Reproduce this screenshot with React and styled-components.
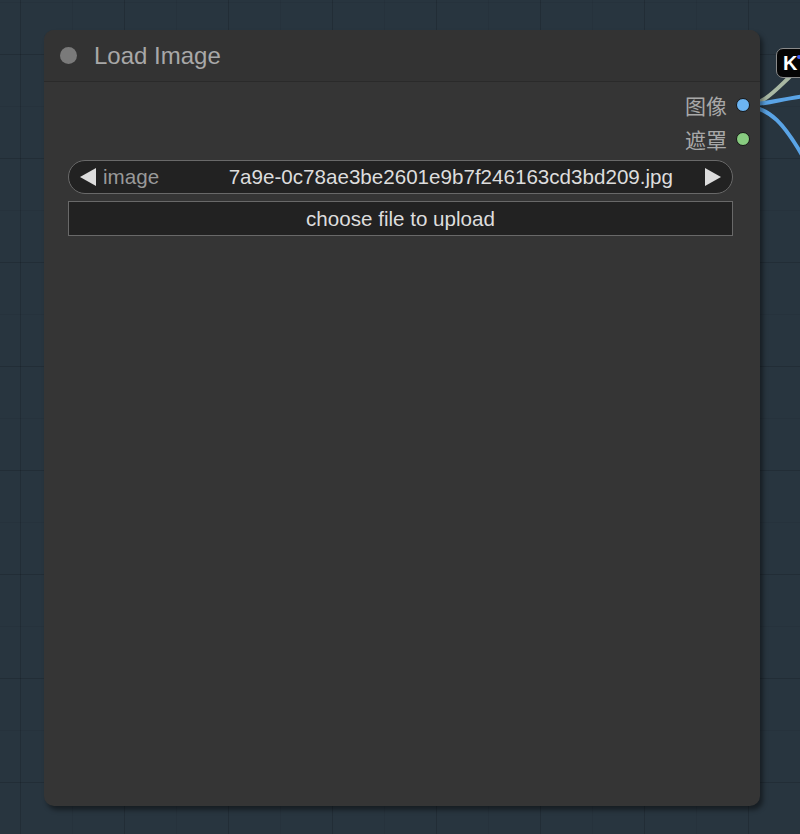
import React from "react";
import styled, { createGlobalStyle } from "styled-components";

const Global = createGlobalStyle`
  html, body { margin: 0; padding: 0; background: #28353f; }
  body { font-family: "Liberation Sans", Arial, sans-serif; }
`;

const Canvas = styled.div`
  position: relative;
  width: 800px;
  height: 834px;
  overflow: hidden;
  background-color: #28353f;
  background-image:
    linear-gradient(to right, rgba(0,0,0,0.10) 1px, transparent 1px),
    linear-gradient(to bottom, rgba(0,0,0,0.10) 1px, transparent 1px),
    linear-gradient(to right, rgba(0,0,0,0.05) 1px, transparent 1px),
    linear-gradient(to bottom, rgba(0,0,0,0.05) 1px, transparent 1px);
  background-size: 104px 104px, 104px 104px, 52px 52px, 52px 52px;
  background-position: 20px 0, 0 54px, 20px 0, 0 54px;
  padding: 30px 0 0 44px;
  box-sizing: border-box;
`;

const Wires = styled.svg`
  position: absolute;
  left: 700px;
  top: 40px;
  width: 100px;
  height: 140px;
  z-index: 0;
`;

const Node = styled.div`
  position: relative;
  z-index: 1;
  width: 716px;
  height: 776px;
  background: #353535;
  border-radius: 10px;
  box-shadow: 3px 4px 5px rgba(0, 0, 0, 0.45);
  display: flex;
  flex-direction: column;
`;

const TitleBar = styled.div`
  height: 51px;
  background: #333333;
  border-radius: 10px 10px 0 0;
  border-bottom: 1px solid #2a2a2a;
  display: flex;
  align-items: center;
  gap: 17px;
  padding-left: 16px;
`;

const TitleDot = styled.span`
  width: 17px;
  height: 17px;
  border-radius: 50%;
  background: #7a7a7a;
`;

const Title = styled.span`
  font-size: 24px;
  color: #a8a8a8;
  line-height: 1;
`;

const Outputs = styled.div`
  display: flex;
  flex-direction: column;
  padding-top: 6px;
`;

const OutputRow = styled.div`
  height: 34px;
  display: flex;
  align-items: center;
  justify-content: flex-end;
  gap: 9px;
  padding-right: 10px;
`;

const OutputLabel = styled.span`
  font-family: "Noto Sans CJK SC", "Liberation Sans", sans-serif;
  font-size: 21px;
  color: #a8a8a8;
  line-height: 1;
`;

const Slot = styled.span`
  width: 12px;
  height: 12px;
  border-radius: 50%;
  background: ${(p) => p.$color};
  border: 1.5px solid #151515;
`;

const Widgets = styled.div`
  display: flex;
  flex-direction: column;
  gap: 7px;
  margin: 4px 27px 0 24px;
`;

const Combo = styled.div`
  height: 34px;
  box-sizing: border-box;
  border-radius: 17px;
  background: #222222;
  border: 1.5px solid #696969;
  display: flex;
  align-items: center;
  padding: 0 11px 0 11px;
  font-size: 20.6px;
`;

const Arrow = styled.span`
  width: 0;
  height: 0;
  border-top: 9px solid transparent;
  border-bottom: 9px solid transparent;
  ${(p) =>
    p.$dir === "left"
      ? "border-right: 16px solid #dddddd;"
      : "border-left: 16px solid #dddddd;"}
`;

const ComboLabel = styled.span`
  color: #999999;
  margin-left: 7px;
  flex: 1;
`;

const ComboValue = styled.span`
  color: #dddddd;
  margin-right: 32px;
`;

const UploadButton = styled.div`
  height: 35px;
  box-sizing: border-box;
  background: #222222;
  border: 1.5px solid #696969;
  display: flex;
  align-items: center;
  justify-content: center;
  color: #dddddd;
  font-size: 20.6px;
`;

const Badge = styled.div`
  position: absolute;
  left: 776px;
  top: 48px;
  width: 40px;
  height: 30px;
  box-sizing: border-box;
  background: #050505;
  border: 1.5px solid #8a8a8a;
  border-radius: 7px;
  color: #ffffff;
  font-weight: bold;
  font-size: 20px;
  display: flex;
  align-items: center;
  padding-left: 6px;
  z-index: 2;
`;

const BadgeDot = styled.span`
  position: absolute;
  left: 20px;
  top: 6px;
  width: 4px;
  height: 4px;
  border-radius: 50%;
  background: #3a5cff;
`;

export default function App() {
  return (
    <>
      <Global />
      <Canvas>
        <Wires viewBox="700 40 100 140">
          <path d="M743 105 C 765 105, 775 90, 795 72" stroke="#a9b8a3" strokeWidth="4" fill="none" />
          <path d="M743 105 C 765 105, 780 99, 805 96" stroke="#5aa4e6" strokeWidth="4" fill="none" />
          <path d="M743 106 C 770 106, 785 125, 805 160" stroke="#5aa4e6" strokeWidth="4" fill="none" />
        </Wires>
        <Badge>
          K
          <BadgeDot />
        </Badge>
        <Node>
          <TitleBar>
            <TitleDot />
            <Title>Load Image</Title>
          </TitleBar>
          <Outputs>
            <OutputRow>
              <OutputLabel>图像</OutputLabel>
              <Slot $color="#6cb4f2" />
            </OutputRow>
            <OutputRow>
              <OutputLabel>遮罩</OutputLabel>
              <Slot $color="#88cc80" />
            </OutputRow>
          </Outputs>
          <Widgets>
            <Combo>
              <Arrow $dir="left" />
              <ComboLabel>image</ComboLabel>
              <ComboValue>7a9e-0c78ae3be2601e9b7f246163cd3bd209.jpg</ComboValue>
              <Arrow $dir="right" />
            </Combo>
            <UploadButton>choose file to upload</UploadButton>
          </Widgets>
        </Node>
      </Canvas>
    </>
  );
}
